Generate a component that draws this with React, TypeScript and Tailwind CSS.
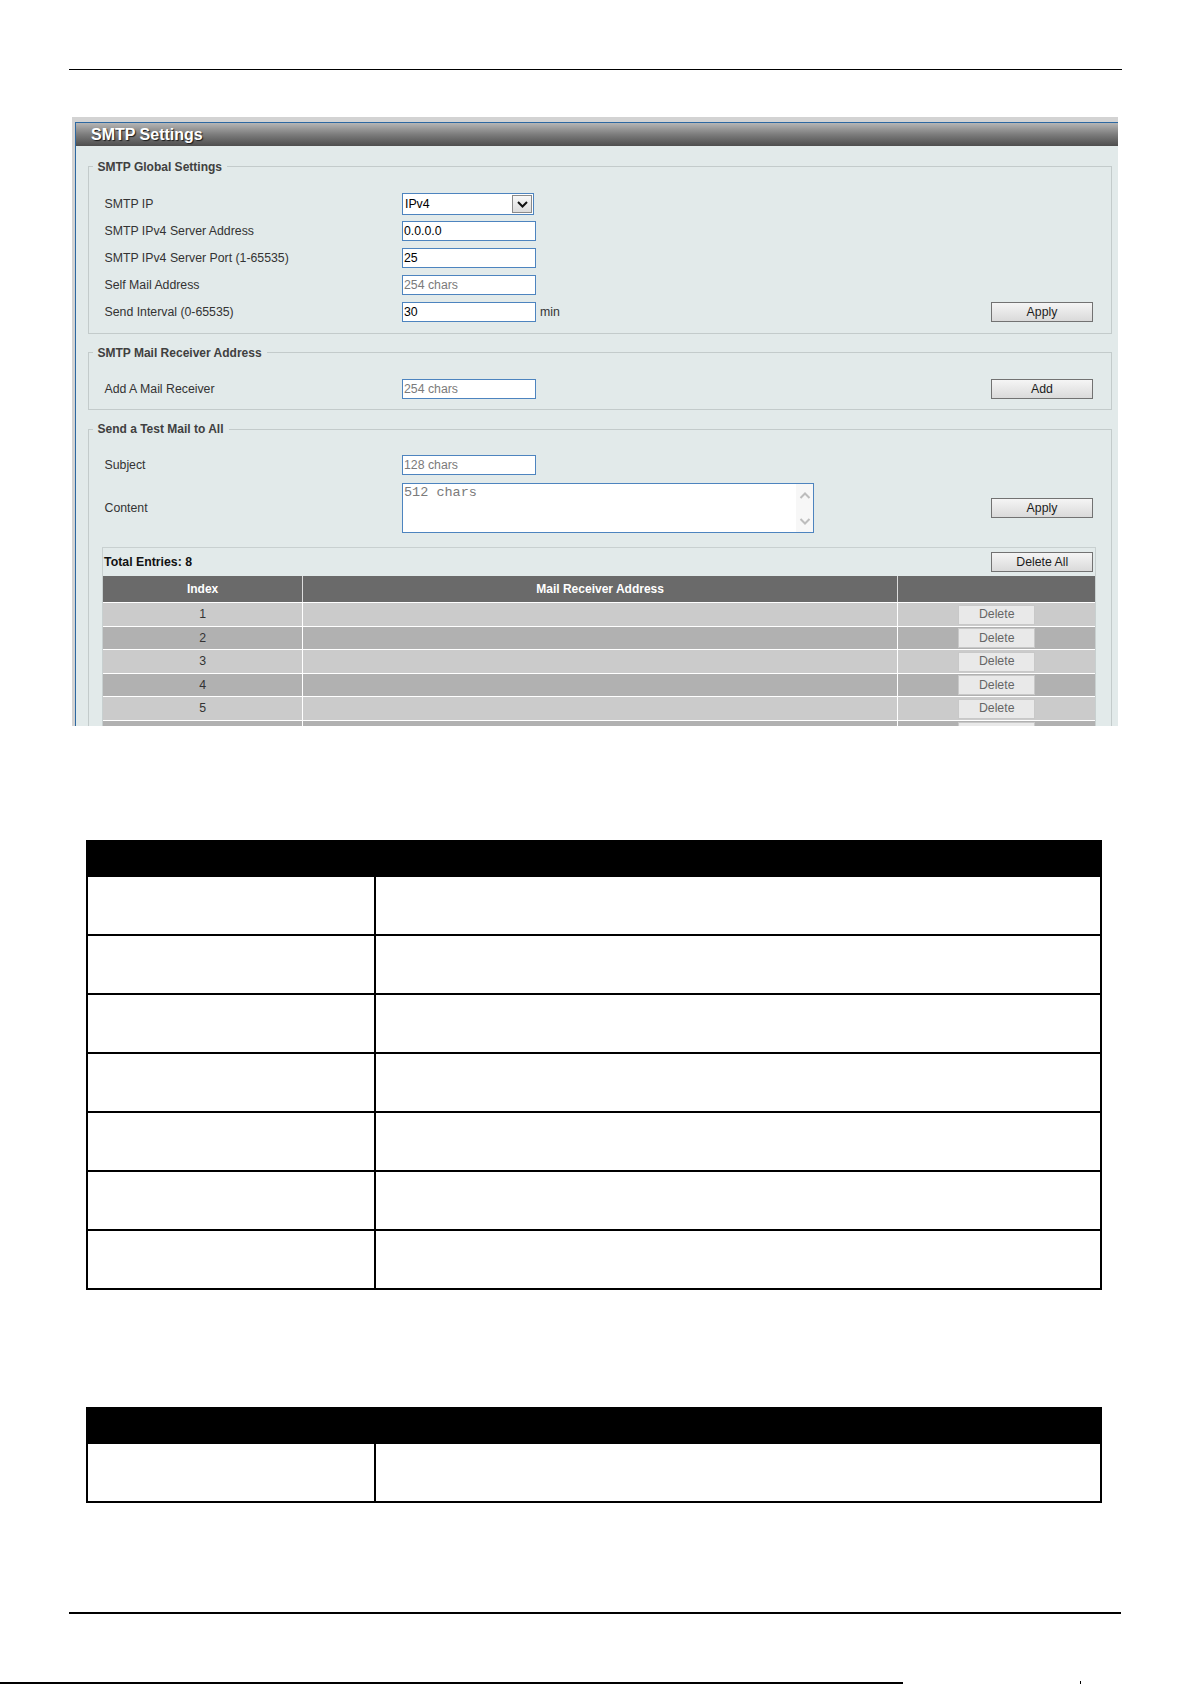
import React from "react";

const labelCls = "w-[297.5px] shrink-0 text-[12.3px] leading-none text-[#333]";

function Group({
  title,
  className,
  children,
}: {
  title: string;
  className: string;
  children: React.ReactNode;
}) {
  return (
    <fieldset className={`border border-[#c3cbcb] ${className}`}>
      <legend className="ml-[4px] px-[5px] text-[12px] font-bold leading-[14px] text-[#404040]">
        {title}
      </legend>
      {children}
    </fieldset>
  );
}

function Row({ label, children }: { label: string; children?: React.ReactNode }) {
  return (
    <div className="flex h-[27px] items-center pl-[16px] pr-[17.5px]">
      <div className={labelCls}>{label}</div>
      {children}
    </div>
  );
}

function TextBox({ value, placeholder }: { value?: string; placeholder?: string }) {
  return (
    <div className="flex h-[20px] w-[134px] items-center border border-[#4d84bf] bg-white pl-[1px] text-[12.3px] leading-none">
      {value ? (
        <span className="text-black">{value}</span>
      ) : (
        <span className="text-[#7b7b7b]">{placeholder}</span>
      )}
    </div>
  );
}

function Btn({ label }: { label: string }) {
  return (
    <button className="ml-auto flex h-[20px] w-[102px] items-center justify-center border border-[#727272] bg-gradient-to-b from-[#f5f5f5] to-[#dadada] text-[12.3px] leading-none text-[#1c1c1c]">
      {label}
    </button>
  );
}

function Chevron({ up, color, w }: { up?: boolean; color: string; w: number }) {
  return (
    <svg width={w} height={7} viewBox="0 0 11 7">
      <path
        d={up ? "M1 6 L5.5 1.5 L10 6" : "M1 1 L5.5 5.5 L10 1"}
        stroke={color}
        strokeWidth={2}
        fill="none"
      />
    </svg>
  );
}

function DocTable({ rows }: { rows: number }) {
  return (
    <div className="ml-[86px] w-[1016px]">
      <div className="h-[37px] bg-black" />
      {Array.from({ length: rows }).map((_, i) => (
        <div key={i} className="flex h-[59px] border-x-2 border-b-2 border-black">
          <div className="w-[288px] border-r-2 border-black" />
          <div className="flex-1" />
        </div>
      ))}
    </div>
  );
}

// rows that fit in the visible part of the panel
const entries = [1, 2, 3, 4, 5, 6];

export default function App() {
  return (
    <div className="flex h-[1684px] w-[1192px] flex-col overflow-hidden bg-white font-['Liberation_Sans',Arial,sans-serif]">
      {/* page header rule */}
      <div className="ml-[69px] mt-[69px] h-[2px] w-[1053px] bg-black" />

      {/* SMTP settings panel */}
      <div className="ml-[72px] mt-[47px] h-[609px] w-[1046px] shrink-0 overflow-hidden bg-[#d3d3d3] pl-[3px] pt-[5px]">
        <div className="h-full border-l border-t border-[#2d68a1] bg-[#e2eaea]">
          <div className="flex h-[23px] items-center bg-gradient-to-b from-[#b6b6b6] via-[#7c7c7c] to-[#4e4e4e] pl-[15px] text-[16px] font-bold leading-none text-white [text-shadow:1px_1px_1px_#1a1a1a]">
            SMTP Settings
          </div>

          <div className="ml-[11.5px] mr-[6.5px]">
            <Group title="SMTP Global Settings" className="mt-[13.7px] pb-[7px]">
              <div className="pt-[17px]">
                <Row label="SMTP IP">
                  <div className="flex h-[22px] w-[132px] items-center justify-between border border-[#4d84bf] bg-white pl-[2px] pr-[1px] text-[12.3px] leading-none text-black">
                    <span>IPv4</span>
                    <div className="flex h-[18px] w-[20px] items-center justify-center border border-[#8a8a8a] bg-gradient-to-b from-[#f8f8f8] to-[#dcdcdc]">
                      <Chevron color="#111" w={11} />
                    </div>
                  </div>
                </Row>
                <Row label="SMTP IPv4 Server Address">
                  <TextBox value="0.0.0.0" />
                </Row>
                <Row label="SMTP IPv4 Server Port (1-65535)">
                  <TextBox value="25" />
                </Row>
                <Row label="Self Mail Address">
                  <TextBox placeholder="254 chars" />
                </Row>
                <Row label="Send Interval (0-65535)">
                  <TextBox value="30" />
                  <span className="ml-[4px] text-[12.3px] leading-none text-[#333]">min</span>
                  <Btn label="Apply" />
                </Row>
              </div>
            </Group>

            <Group title="SMTP Mail Receiver Address" className="mt-[12px] pb-[6px]">
              <div className="pt-[16px]">
                <Row label="Add A Mail Receiver">
                  <TextBox placeholder="254 chars" />
                  <Btn label="Add" />
                </Row>
              </div>
            </Group>

            <Group title="Send a Test Mail to All" className="mt-[12.6px] pb-[20px]">
              <div className="pt-[15.5px]">
                <Row label="Subject">
                  <TextBox placeholder="128 chars" />
                </Row>
                <div className="mt-[4.5px] flex h-[50px] items-center pl-[16px] pr-[17.5px]">
                  <div className={labelCls}>Content</div>
                  <div className="flex h-[50px] w-[412px] border border-[#4d84bf] bg-white">
                    <div className="flex-1 pl-[1px] pt-[2px] font-['Liberation_Mono','Courier_New',monospace] text-[13.5px] leading-[14px] text-[#7b7b7b]">
                      512 chars
                    </div>
                    <div className="flex w-[17px] flex-col items-center justify-between bg-[#f7f7f7] pb-[7px] pt-[8px]">
                      <Chevron up color="#bdbdbd" w={12} />
                      <Chevron color="#bdbdbd" w={12} />
                    </div>
                  </div>
                  <Btn label="Apply" />
                </div>

                {/* receiver list */}
                <div className="ml-[13.6px] mr-[14.2px] mt-[14px] border-x border-t border-[#c8d0d0]">
                  <div className="flex h-[28px] items-center pl-[1px] pr-[2px]">
                    <span className="text-[12.3px] font-bold leading-none text-[#111]">Total Entries: 8</span>
                    <Btn label="Delete All" />
                  </div>
                  <div className="grid h-[26px] grid-cols-[199px_595px_1fr] bg-[#6a6a6a] text-[12px] font-bold leading-none text-white">
                    <div className="flex items-center justify-center">Index</div>
                    <div className="flex items-center justify-center border-l border-[#dcdcdc]">Mail Receiver Address</div>
                    <div className="border-l border-[#dcdcdc]" />
                  </div>
                  {entries.map((n) => (
                    <div
                      key={n}
                      className={`grid h-[23.5px] grid-cols-[199px_595px_1fr] border-t border-white ${
                        n % 2 === 1 ? "bg-[#cbcbcb]" : "bg-[#b1b1b1]"
                      }`}
                    >
                      <div className="flex items-center justify-center text-[12.3px] leading-none text-[#333]">{n}</div>
                      <div className="border-l border-white" />
                      <div className="flex items-center justify-center border-l border-white">
                        <button className="flex h-[20px] w-[77px] items-center justify-center border border-[#c8c8c8] bg-[#e9e9e9] text-[12.3px] leading-none text-[#666]">
                          Delete
                        </button>
                      </div>
                    </div>
                  ))}
                </div>
              </div>
            </Group>
          </div>
        </div>
      </div>

      {/* parameter tables */}
      <div className="mt-[114px] shrink-0">
        <DocTable rows={7} />
      </div>
      <div className="mt-[117px] shrink-0">
        <DocTable rows={1} />
      </div>

      {/* page footer rules */}
      <div className="ml-[69px] mt-[109px] h-[2px] w-[1052px] shrink-0 bg-black" />
      <div className="mt-[67px] flex shrink-0 items-end">
        <div className="h-[2px] w-[903px] bg-black" />
        <div className="ml-[177px] h-[3px] w-[1px] bg-black" />
      </div>
    </div>
  );
}
